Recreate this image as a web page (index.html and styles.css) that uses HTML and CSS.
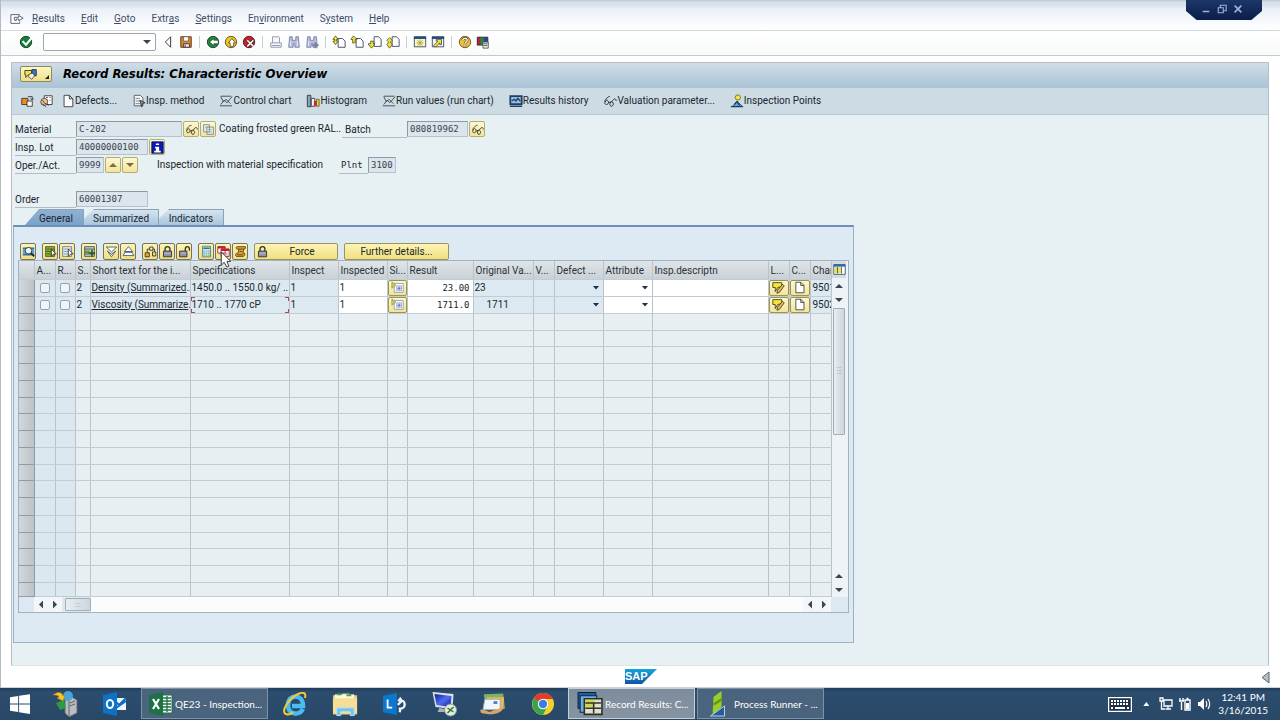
FILE: index.html
```html
<!DOCTYPE html>
<html lang="en">
<head>
<meta charset="utf-8">
<title>Record Results: Characteristic Overview</title>
<link rel="stylesheet" href="styles.css">
</head>
<body>
<svg class="defs" aria-hidden="true">
<defs>
<linearGradient id="gblue" x1="0" y1="0" x2="0" y2="1"><stop offset="0" stop-color="#14a5e0"/><stop offset="1" stop-color="#1453a5"/></linearGradient>
<linearGradient id="gscreen" x1="0" y1="0" x2="1" y2="1"><stop offset="0" stop-color="#0a1a9c"/><stop offset=".5" stop-color="#4f6cf0"/><stop offset="1" stop-color="#1020a0"/></linearGradient>
</defs>
<symbol id="menu" viewBox="0 0 16 16"><path d="M11 3H1v10h10v-2M5 9V6h5V4l5 3-5 3V8H7v2z" fill="#fff" stroke="#4a5568"/></symbol>
<symbol id="ok" viewBox="0 0 16 16"><circle cx="8" cy="8" r="6.5" fill="#14803a" stroke="#0b3b1a"/><path d="M4 7l4 4 6-7" fill="none" stroke="#fff" stroke-width="2.4"/></symbol>
<symbol id="tri" viewBox="0 0 16 16"><path d="M11 2v12L5 8z" fill="#fff" stroke="#222"/></symbol>
<symbol id="save" viewBox="0 0 16 16"><path d="M2 2h12v12H2z" fill="#d98a2b" stroke="#5b2d0a"/><path d="M5 2h6v5H5z" fill="#fff" stroke="#6e5a4a"/><path d="M5 10h7v4H5z" fill="#e9e2f2" stroke="#4a2c3c"/><path d="M7 11v3" stroke="#333"/></symbol>
<symbol id="back" viewBox="0 0 16 16"><circle cx="8" cy="8" r="6.5" fill="#1c8a3c" stroke="#10401d"/><path d="M4 8l5-4v2h5v4H9v2z" fill="#fff" stroke="#222" stroke-width=".7"/></symbol>
<symbol id="exit" viewBox="0 0 16 16"><circle cx="8" cy="8" r="6.5" fill="#f2c71c" stroke="#5b4a10"/><path d="M9 4l4 5h-2v4H7V9H5z" fill="#fff" stroke="#333" stroke-width=".8"/></symbol>
<symbol id="cancel" viewBox="0 0 16 16"><circle cx="8" cy="8" r="6.5" fill="#d01e28" stroke="#4c0c10"/><path d="M6 6l7 7M13 6l-7 7" stroke="#222" stroke-width="3"/><path d="M6 6l7 7M13 6l-7 7" stroke="#fff" stroke-width="1.8"/></symbol>
<symbol id="print" viewBox="0 0 16 16"><path d="M4 9V2h7l1 1v6M2 9h12v5H2zM3 12h10" fill="#f4f6fb" stroke="#8b93a8"/></symbol>
<symbol id="find" viewBox="0 0 16 16"><path d="M3 2h3v4h4V2h3l1 12H9v-4H7v4H2z" fill="#b9bedd" stroke="#777ea6"/><path d="M4 7v6M12 7v6" stroke="#eef"/></symbol>
<symbol id="findn" viewBox="0 0 16 16"><use href="#find"/><path d="M12 8v7M8.500 11.500h7" stroke="#777ea6" stroke-width="2"/></symbol>
<symbol id="pfirst" viewBox="0 0 16 16"><path d="M7 4h5l3 3v7H7z" fill="#fff" stroke="#37405a"/><path d="M4 1l3 4H5v2h2l-3 4-3-4h2V5H1z" fill="#f1e53c" stroke="#3b3a10" stroke-width=".8"/></symbol>
<symbol id="pup" viewBox="0 0 16 16"><path d="M7 4h5l3 3v7H7z" fill="#fff" stroke="#37405a"/><path d="M4 1l4 4H6v4H3V5H1z" fill="#f1e53c" stroke="#3b3a10" stroke-width=".8"/></symbol>
<symbol id="pdown" viewBox="0 0 16 16"><path d="M7 2h5l3 3v8H7z" fill="#fff" stroke="#37405a"/><path d="M3 7h3v3h2l-4 5-4-5h3z" fill="#f1e53c" stroke="#3b3a10" stroke-width=".8"/></symbol>
<symbol id="plast" viewBox="0 0 16 16"><path d="M7 2h5l3 3v8H7z" fill="#fff" stroke="#37405a"/><path d="M4 3l3 3-2 2 2 3-3 4-3-4 2-3-2-2z" fill="#f1e53c" stroke="#3b3a10" stroke-width=".8"/></symbol>
<symbol id="session" viewBox="0 0 16 16"><path d="M1.500 2.500h13v11h-13z" fill="#f8f6d0" stroke="#3a4350"/><path d="M1 3h14" stroke="#20497c" stroke-width="3"/><path d="M8 5v8M4 9h8M5 6l6 6M11 6l-6 6" stroke="#b2a21c"/></symbol>
<symbol id="shortcut" viewBox="0 0 16 16"><path d="M1.500 2.500h13v11h-13z" fill="#f6f8fa" stroke="#3a4350"/><path d="M1 3h14" stroke="#20497c" stroke-width="3"/><path d="M3 12l5-5H6V5h6v6h-2V9l-5 5z" fill="#f1e53c" stroke="#333" stroke-width=".8"/></symbol>
<symbol id="help" viewBox="0 0 16 16"><circle cx="8" cy="8" r="6.500" fill="#efc33a" stroke="#66500d"/><path d="M5.500 6c0-3 5-3 5 0 0 2-2.500 2-2.500 4M8 11v2" fill="none" stroke="#5a4610" stroke-width="3"/><path d="M5.500 6c0-3 5-3 5 0 0 2-2.500 2-2.500 4M8 11v2" fill="none" stroke="#fff" stroke-width="1.500"/></symbol>
<symbol id="local" viewBox="0 0 16 16"><path d="M1.500 2.500h12v9h-12z" fill="#b52437" stroke="#222"/><path d="M5 3h4v8H5z" fill="#218c3a"/><path d="M9 3h4v8H9z" fill="#2641b4"/><path d="M8 8h6v7H8zM9 10h4M9 12h4" fill="#eee" stroke="#555"/></symbol>
<symbol id="title" viewBox="0 0 16 16"><path d="M1 4h8v5H5l-3 3V9H1z" fill="#f1e53c" stroke="#333"/><path d="M9 3h5v7H9z" fill="#3c79c8" stroke="#1b2a4b"/><path d="M6 8l4-1 2 3-3 4-4-3z" fill="#f7f1de" stroke="#333" stroke-width=".8"/></symbol>
<symbol id="switch" viewBox="0 0 16 16"><path d="M2 5h7v7H2z" fill="#f08c1e" stroke="#333"/><path d="M8 8h6v6H8z" fill="#fff" stroke="#333"/><path d="M9 3h5v4M12 5l2 2 2-2" fill="none" stroke="#333"/></symbol>
<symbol id="valuate" viewBox="0 0 16 16"><path d="M6 2h9v10H6zM8 4h2M12 4h1M8 7h2M12 7h1" fill="#fff" stroke="#333"/><circle cx="6" cy="9" r="4" fill="#f0c49a" stroke="#543"/><path d="M4 7l2 3 5 3M4 11l4 4" fill="none" stroke="#333"/></symbol>
<symbol id="doc" viewBox="0 0 16 16"><path d="M3.500 1.500h6l4 4v9h-10zM9.500 1.500v4h4" fill="#fff" stroke="#30363f"/></symbol>
<symbol id="method" viewBox="0 0 16 16"><path d="M2.500 1.500h7l3 3v9h-10z" fill="#f7f9fa" stroke="#4b5561"/><path d="M4 5h5M4 8h5M4 11h5" stroke="#6e7882"/><path d="M9 7l6 3-3 1-1 4z" fill="#88939b" stroke="#333"/></symbol>
<symbol id="chart" viewBox="0 0 16 16"><path d="M2 2.500h12M1 13.500h14M2 12l4-5 3 3 6-7M2 3l3 6 3-3 5 5" fill="none" stroke="#39424c"/></symbol>
<symbol id="hist" viewBox="0 0 16 16"><path d="M1.500 1.500h4v13h-4z" fill="#7fa7c3" stroke="#333"/><path d="M6 5h4v9H6z" fill="#f6f6f6" stroke="#333"/><path d="M9 8h3v6H9z" fill="#c92934"/><path d="M12 6h3v8h-3z" fill="#e7d12d" stroke="#333" stroke-width=".7"/></symbol>
<symbol id="history" viewBox="0 0 16 16"><path d="M1.500 2.500h13v9h-13z" fill="#8cc0ea" stroke="#223d63" stroke-width="2"/><path d="M3 8l3-2 2 2 2-3 3 3M1 14h14" fill="none" stroke="#223d63" stroke-width="1.500"/></symbol>
<symbol id="glasses" viewBox="0 0 16 16"><path d="M2 9c0-3 5-7 6-6M4 7c-3 3-2 5 0 5 3 0 3-5 0-5M9 9c-2 3-1 5 1 5 3-1 2-6-1-5l-3 1M10 9c3-5 5-4 5-1" fill="none" stroke="#222"/></symbol>
<symbol id="points" viewBox="0 0 16 16"><path d="M3 14l5-6 6 6z" fill="#75afd4" stroke="#28577e"/><path d="M1 14.500h14M5 12l3-3 3 4" fill="none" stroke="#193f69" stroke-width="1.500"/><circle cx="9" cy="4" r="3" fill="#f4e448" stroke="#776b16"/></symbol>
<symbol id="copy" viewBox="0 0 16 16"><path d="M2 2h7v9H2zM6 5h8v9H6z" fill="#e5efef" stroke="#6f8480"/><path d="M4 5h4M8 8h4M8 11h4" stroke="#8aa39c"/></symbol>
<symbol id="info" viewBox="0 0 16 16"><path d="M1 1h14v14H1z" fill="#0a18b8" stroke="#050a50"/><path d="M6 3h4v2H6zM5 7h5v5h2v2H4v-2h2V9H5z" fill="#fff"/></symbol>
<symbol id="mag" viewBox="0 0 16 16"><path d="M1 3h14v10H1z" fill="#5ba0d6"/><path d="M1 4h14M1 12h14" stroke="#28577e"/><circle cx="8" cy="7" r="4" fill="#eef7fa" stroke="#222"/><path d="M11 10l4 4" stroke="#222" stroke-width="2"/></symbol>
<symbol id="selall" viewBox="0 0 16 16"><path d="M2 2h11v12H2z" fill="#8fb52b" stroke="#444"/><path d="M3 5h9M3 8h9M3 11h9" stroke="#34530e"/><path d="M9 5l6 6h-3l-3 3z" fill="#fff" stroke="#222"/></symbol>
<symbol id="desel" viewBox="0 0 16 16"><path d="M2 2h11v12H2z" fill="#e7eef3" stroke="#66727c"/><path d="M3 5h9M3 8h9M3 11h9" stroke="#72879b"/><path d="M9 5l6 6h-3l-3 3z" fill="#fff" stroke="#222"/></symbol>
<symbol id="insrow" viewBox="0 0 16 16"><path d="M2 2h12v12H2z" fill="#bfc9c2" stroke="#445"/><path d="M2 5h12M2 11h12" stroke="#445"/><path d="M2 7h6v3H2z" fill="#5b9a2d"/><path d="M11 6v8M7 10h8" stroke="#24601c" stroke-width="2"/></symbol>
<symbol id="expand" viewBox="0 0 16 16"><path d="M1.500 2.500h13l-6.500 6zM3 7.500l5 4 5-4-5 7z" fill="#fff" stroke="#334b79"/></symbol>
<symbol id="collapse" viewBox="0 0 16 16"><path d="M8 2l5 6H3zM3.500 9h9l2 4h-13z" fill="#fff" stroke="#334b79"/></symbol>
<symbol id="link" viewBox="0 0 16 16"><path d="M1.500 9.500h5v5h-5z" fill="#f5a72a" stroke="#222"/><path d="M10.500 8.500h4v5h-4z" fill="#f4e27a" stroke="#222"/><path d="M4 9V5h3M10 5h3v3" fill="none" stroke="#222"/><path d="M7 2.500h4v4H7z" fill="#eee" stroke="#222"/></symbol>
<symbol id="lock" viewBox="0 0 16 16"><path d="M5 8V5c0-4 6-4 6 0v3" fill="none" stroke="#333" stroke-width="1.600"/><path d="M3 7.500h10v7H3z" fill="#8e93aa" stroke="#222"/><path d="M4 10h8" stroke="#c7cad9"/></symbol>
<symbol id="unlock" viewBox="0 0 16 16"><path d="M9 8V5c0-4 5-4 5 0v2" fill="none" stroke="#333" stroke-width="1.600"/><path d="M2 7.500h9v7H2z" fill="#8e93aa" stroke="#222"/><path d="M3 10h7" stroke="#c7cad9"/></symbol>
<symbol id="calc" viewBox="0 0 16 16"><path d="M3 1.500h10v13H3z" fill="#d9ecea" stroke="#477"/><path d="M4 3h8v2H4z" fill="#297c87"/><path d="M4 7.500h8M4 10h8M4 12.500h8" stroke="#348790" stroke-dasharray="2 1"/></symbol>
<symbol id="copyred" viewBox="0 0 16 16"><path d="M1 2h9v8H1zM5 5h10v9H5z" fill="#fff" stroke="#8b1822"/><path d="M1 3h9M5 6h10" stroke="#bd202c" stroke-width="2.500"/><path d="M7 10h6M7 12h6" stroke="#c9666c"/></symbol>
<symbol id="scroll" viewBox="0 0 16 16"><path d="M4 2h10c1 3-1 3-2 3l-1 5h2c1 3-1 4-2 4H3c-2-1-1-4 1-4h1l1-5H4c-2 0-2-3 0-3z" fill="#d9a53c" stroke="#55380a"/><path d="M6 5h6M7 8h3M4 12h7" stroke="#55380a"/></symbol>
<symbol id="single" viewBox="0 0 16 16"><path d="M4 3h11v11H4z" fill="#fafcff" stroke="#9098a8"/><path d="M7 6h6v6H7z" fill="#dde6f7" stroke="#9aa8cc"/><path d="M10 7v4M8 9h4" stroke="#4763ad"/><path d="M1 1l5 4-5 4z" fill="#c9cc63" stroke="#7a7d3c" stroke-width=".7"/></symbol>
<symbol id="longtext" viewBox="0 0 16 16"><path d="M1 2h11v5l-5 1-3 5V8H1z" fill="#f5e72e" stroke="#333"/><path d="M13 4l2 2-6 8-3 1 1-4z" fill="#f2b84b" stroke="#333"/></symbol>
<symbol id="config" viewBox="0 0 16 16"><path d="M1 2h14v12H1z" fill="#fff" stroke="#234d84"/><path d="M1 3h14" stroke="#2c67b2" stroke-width="3"/><path d="M2 5h8v8H2z" fill="#f3e04c"/><path d="M5.500 5v8M10.500 5v8" stroke="#234d84"/></symbol>
<symbol id="win" viewBox="0 0 22 22"><path d="M0 3.500l9-1.300v8.300H0zM10 2l12-1.800v10.300H10zM0 11.500h9v8.300L0 18.500zM10 11.500h12V22l-12-1.800z" fill="#fff"/></symbol>
<symbol id="server" viewBox="0 0 26 26"><path d="M13 8l7-2 5 3v13l-8 4-4-4z" fill="#b9bdc0" stroke="#667"/><path d="M17 9v16M18 12l5-2M18 15l5-2" stroke="#5b646c"/><circle cx="16" cy="5" r="5" fill="#45a5dc"/><path d="M4 12l8-3 2 8-6 2z" fill="#2b9b46"/><path d="M1 4c5-4 9-3 10 1l2-1-2 6-6-3 2-1c-1-2-3-2-6-2z" fill="#f6c526" stroke="#b17b08" stroke-width=".6"/></symbol>
<symbol id="outlook" viewBox="0 0 24 24"><path d="M11 6h12v12H11z" fill="#eef6fd"/><path d="M11 8l5 5 7-7M13 16l10-7" stroke="#0f6cc0" stroke-width="2" fill="none"/><path d="M0 3l14-3v24L0 21z" fill="#0c72c6"/><ellipse cx="7" cy="12" rx="3.200" ry="4" fill="none" stroke="#fff" stroke-width="2"/></symbol>
<symbol id="excel" viewBox="0 0 24 24"><path d="M12 3h11v18H12z" fill="#fff" stroke="#1e7145"/><path d="M14 6h8M14 9h8M14 12h8M14 15h8M14 18h8M18 4v16" stroke="#1e7145" stroke-width="1.300"/><path d="M0 3l14-3v24L0 21z" fill="#1e7145"/><path d="M4 7l6 10M10 7L4 17" stroke="#fff" stroke-width="2.200"/></symbol>
<symbol id="ie" viewBox="0 0 24 24"><path d="M20 17c-4 7-15 6-15-4C5 2 20 1 20 14H9" fill="none" stroke="#49bdf0" stroke-width="4.500"/><path d="M3 22C-3 20 6 6 15 2c7-3 8 0 7 4M3 22c2 1 5 0 7-2" fill="none" stroke="#f5c932" stroke-width="2"/></symbol>
<symbol id="folder" viewBox="0 0 28 26"><path d="M1 4h8l2-2h7v2h8v20H1z" fill="#e8ca72"/><path d="M3 3h20v6H3z" fill="#fff5d8"/><path d="M5 3h5M15 4h5" stroke="#4a9d58" stroke-width="2"/><path d="M1 7h25v16H1z" fill="#f6df94"/><path d="M5 25v-8h18v8h-4v-4H9v4z" fill="#77c4ea" stroke="#b6e5f8"/></symbol>
<symbol id="lync" viewBox="0 0 26 24"><path d="M0 3l15-3v24L0 21z" fill="#0a78cf"/><path d="M5 7v9h5" fill="none" stroke="#fff" stroke-width="2"/><path d="M16 8h3c6 0 6 9 0 9h-2M16 13l4-4M19 17l-1 4M20 8l-2-3" fill="none" stroke="#e9f4fc" stroke-width="2.500"/></symbol>
<symbol id="rdp" viewBox="0 0 26 26"><path d="M1 1l21 2-1 15L4 16z" fill="#dce2e8"/><path d="M3 3l17 2-1 11L5 14z" fill="url(#gscreen)"/><path d="M8 17l5 1v3H6z" fill="#aab3ba"/><circle cx="19" cy="19" r="6" fill="#e4efe2" stroke="#8a9b88"/><path d="M16 17l3 2-3 3M22 16l-3 3 3 2" stroke="#2c7a35" fill="none" stroke-width="1.500"/></symbol>
<symbol id="mail" viewBox="0 0 28 24"><path d="M4 2l20-1 2 16H6z" fill="#7db35c"/><path d="M7 5h18l-1 12H5z" fill="#f4b652"/><path d="M5 7h16v11H3z" fill="#f2f6fa" stroke="#91a9bd"/><path d="M14 9h4v3h-4z" fill="#4d88c6"/><path d="M0 18c8-1 8 4 13 1l12-4c-3 8-14 9-24 6z" fill="#d9a663"/></symbol>
<symbol id="chrome" viewBox="0 0 24 24"><circle cx="12" cy="12" r="11" fill="#f7cf2c"/><path d="M12 12L2.500 6.500C6-1 18-1 22 7H12z" fill="#df3c30"/><path d="M12 12L2.500 6.500C-1 14 4 23 12 23l4-8z" fill="#36a350"/><circle cx="12" cy="12" r="5.200" fill="#fff"/><circle cx="12" cy="12" r="4.200" fill="#3e7de0"/></symbol>
<symbol id="sapgui" viewBox="0 0 26 24"><path d="M2 1h17v15H2z" fill="#1f5da6" stroke="#0e1f38"/><path d="M4 4h16v16H4z" fill="#6db0e0" stroke="#10233c"/><path d="M8 7h17v15H8z" fill="#dfe0d2" stroke="#2d3020" stroke-width="1.500"/><path d="M9 8h9v7H9z" fill="#cfd848"/><path d="M9 11h15M9 16h15M17 11v10" stroke="#30342a" stroke-width="1.500"/></symbol>
<symbol id="runner" viewBox="0 0 20 26"><path d="M5 6l8-6v16L4 24z" fill="#9bcf28"/><path d="M5 12l8-5v3l-8 5z" fill="#5f9b19"/><path d="M2 25l14-10v10z" fill="#255d98" stroke="#b4d2ec"/></symbol>
<symbol id="kbd" viewBox="0 0 24 15"><path d="M.5.500h23v14H.5z" fill="#1d3148" stroke="#fff" stroke-width="1.500"/><path d="M3 4h18M3 7h18" stroke="#fff" stroke-width="2" stroke-dasharray="2 1"/><path d="M3 11h2M7 11h10M19 11h2" stroke="#fff" stroke-width="2"/></symbol>
<symbol id="net" viewBox="0 0 14 14"><path d="M5 3h8v6H5zM7 12h5M9 9v3M1 1h3v3H1zM2.500 4v8h4" fill="none" stroke="#fff" stroke-width="1.300"/></symbol>
<symbol id="bat" viewBox="0 0 14 14"><path d="M7 3h5v10H7zM8.500 1.500h2" fill="none" stroke="#fff" stroke-width="1.400"/><path d="M8 6h3v6H8z" fill="#fff"/><path d="M1 4h5M2 1v3M5 1v3M3.500 5v8" stroke="#fff" stroke-width="1.400"/></symbol>
<symbol id="vol" viewBox="0 0 14 14"><path d="M1 5h2l4-4v12L3 9H1z" fill="#fff"/><path d="M9 4c1 2 1 4 0 6M11 2c2 3 2 7 0 10" fill="none" stroke="#fff" stroke-width="1.200"/></symbol>
</svg>

<div class="session">
  <header class="edge">
    <div class="winctl">
      <button aria-label="Minimize"><svg viewBox="0 0 12 12"><path d="M2 9h8" stroke="#9db4dc" stroke-width="2"/></svg></button>
      <button aria-label="Restore"><svg viewBox="0 0 12 12"><path d="M4 4V1.500h7V8H8M1.500 4.500h6v6h-6z" fill="none" stroke="#9db4dc" stroke-width="1.300"/></svg></button>
      <button aria-label="Close"><svg viewBox="0 0 12 12"><path d="M2 2l8 8M10 2l-8 8" stroke="#9db4dc" stroke-width="2"/></svg></button>
    </div>
  </header>
  <nav class="menubar">
    <button aria-label="System menu"><svg class="ic"><use href="#menu"/></svg></button>
    <button><u>R</u>esults</button><button><u>E</u>dit</button><button><u>G</u>oto</button><button>Extr<u>a</u>s</button><button><u>S</u>ettings</button><button>En<u>v</u>ironment</button><button>S<u>y</u>stem</button><button><u>H</u>elp</button>
  </nav>
  <div class="stdbar">
    <button aria-label="Enter"><svg class="ic"><use href="#ok"/></svg></button>
    <div class="command"><input type="text" aria-label="Command field"><button aria-label="Command history"><i class="down"></i></button></div>
    <button aria-label="Hide command field"><svg class="ic"><use href="#tri"/></svg></button>
    <button aria-label="Save"><svg class="ic"><use href="#save"/></svg></button><i class="sep"></i>
    <button aria-label="Back"><svg class="ic"><use href="#back"/></svg></button>
    <button aria-label="Exit"><svg class="ic"><use href="#exit"/></svg></button>
    <button aria-label="Cancel"><svg class="ic"><use href="#cancel"/></svg></button><i class="sep"></i>
    <button aria-label="Print"><svg class="ic"><use href="#print"/></svg></button>
    <button aria-label="Find"><svg class="ic"><use href="#find"/></svg></button>
    <button aria-label="Find next"><svg class="ic"><use href="#findn"/></svg></button><i class="sep"></i>
    <button aria-label="First page"><svg class="ic"><use href="#pfirst"/></svg></button>
    <button aria-label="Previous page"><svg class="ic"><use href="#pup"/></svg></button>
    <button aria-label="Next page"><svg class="ic"><use href="#pdown"/></svg></button>
    <button aria-label="Last page"><svg class="ic"><use href="#plast"/></svg></button><i class="sep"></i>
    <button aria-label="New session"><svg class="ic"><use href="#session"/></svg></button>
    <button aria-label="Create shortcut"><svg class="ic"><use href="#shortcut"/></svg></button><i class="sep"></i>
    <button aria-label="Help"><svg class="ic"><use href="#help"/></svg></button>
    <button aria-label="Customize layout"><svg class="ic"><use href="#local"/></svg></button>
  </div>

  <main class="screen">
    <div class="titlebar">
      <button class="objbtn" aria-label="Services"><svg class="ic"><use href="#title"/></svg><span></span></button>
      <h1>Record Results: Characteristic Overview</h1>
    </div>
    <div class="appbar">
      <button aria-label="Switch view"><svg class="ic"><use href="#switch"/></svg></button>
      <button aria-label="Valuate"><svg class="ic"><use href="#valuate"/></svg></button>
      <button><svg class="ic"><use href="#doc"/></svg>Defects...</button>
      <button><svg class="ic"><use href="#method"/></svg>Insp. method</button>
      <button><svg class="ic"><use href="#chart"/></svg>Control chart</button>
      <button><svg class="ic"><use href="#hist"/></svg>Histogram</button>
      <button><svg class="ic"><use href="#chart"/></svg>Run values (run chart)</button>
      <button><svg class="ic"><use href="#history"/></svg>Results history</button>
      <button><svg class="ic"><use href="#glasses"/></svg>Valuation parameter...</button>
      <button><svg class="ic"><use href="#points"/></svg>Inspection Points</button>
    </div>
    <div class="content">
      <form class="head">
        <div class="row">
          <label class="lab" for="mat">Material</label><input id="mat" class="f-mat" value="C-202" readonly>
          <button type="button" class="yb" aria-label="Display material"><svg class="ic"><use href="#glasses"/></svg></button>
          <button type="button" class="yb" aria-label="Copy"><svg class="ic"><use href="#copy"/></svg></button>
          <span class="desc">Coating frosted green RAL..</span>
          <label class="lab batch" for="batch">Batch</label><input id="batch" class="f-batch" value="080819962" readonly>
          <button type="button" class="yb" aria-label="Display batch"><svg class="ic"><use href="#glasses"/></svg></button>
        </div>
        <div class="row">
          <label class="lab" for="lot">Insp. Lot</label><input id="lot" class="f-lot" value="40000000100" readonly>
          <button type="button" class="yb" aria-label="Lot information"><svg class="ic"><use href="#info"/></svg></button>
        </div>
        <div class="row">
          <label class="lab" for="op">Oper./Act.</label><input id="op" class="f-op" value="9999" readonly>
          <button type="button" class="yb" aria-label="Previous operation"><i class="up olive"></i></button>
          <button type="button" class="yb" aria-label="Next operation"><i class="down olive"></i></button>
          <span class="opdesc">Inspection with material specification</span>
          <label class="lab plnt" for="pl">Plnt</label><input id="pl" class="f-op" value="3100" readonly>
        </div>
        <div class="row order">
          <label class="lab" for="ord">Order</label><input id="ord" class="f-ord" value="60001307" readonly>
        </div>
      </form>

      <section class="tabstrip">
        <div class="tabs" role="tablist">
          <button role="tab" aria-selected="true">General</button><button role="tab">Summarized</button><button role="tab">Indicators</button>
        </div>
        <div class="panel">
          <div class="tools">
            <div><button class="yb" aria-label="Details"><svg class="ic"><use href="#mag"/></svg></button></div>
            <div><button class="yb" aria-label="Select all"><svg class="ic"><use href="#selall"/></svg></button><button class="yb" aria-label="Deselect all"><svg class="ic"><use href="#desel"/></svg></button></div>
            <div><button class="yb" aria-label="Insert row"><svg class="ic"><use href="#insrow"/></svg></button></div>
            <div><button class="yb" aria-label="Expand"><svg class="ic"><use href="#expand"/></svg></button><button class="yb" aria-label="Collapse"><svg class="ic"><use href="#collapse"/></svg></button></div>
            <div><button class="yb" aria-label="Valuate characteristic"><svg class="ic"><use href="#link"/></svg></button><button class="yb" aria-label="Close characteristic"><svg class="ic"><use href="#lock"/></svg></button><button class="yb" aria-label="Open characteristic"><svg class="ic"><use href="#unlock"/></svg></button></div>
            <div class="pointed"><button class="yb" aria-label="Calculate"><svg class="ic"><use href="#calc"/></svg></button><button class="yb" aria-label="Copy results"><svg class="ic"><use href="#copyred"/></svg></button><button class="yb" aria-label="Log"><svg class="ic"><use href="#scroll"/></svg></button>
              <svg class="cursor" viewBox="0 0 12 18"><path d="M1 1v14l3-3 3 5 2-1-2-5h4z" fill="#fff" stroke="#333"/></svg></div>
            <button class="yb wide force"><svg class="ic"><use href="#lock"/></svg><span>Force</span></button>
            <button class="yb wide more">Further details...</button>
          </div>
          <div class="gridbox">
            <table>
              <colgroup><col class="w15"><col class="w21"><col class="w20"><col class="w15"><col class="w100"><col class="w99"><col class="w49"><col class="w49"><col class="w20"><col class="w66"><col class="w60"><col class="w21"><col class="w49"><col class="w49"><col class="w116"><col class="w21"><col class="w21"><col></colgroup>
              <thead><tr><th></th><th>A...</th><th>R...</th><th>S..</th><th>Short text for the i...</th><th>Specifications</th><th>Inspect</th><th>Inspected</th><th>Si...</th><th>Result</th><th>Original Va...</th><th>V...</th><th>Defect ...</th><th>Attribute</th><th>Insp.descriptn</th><th>L...</th><th>C...</th><th>Char.</th></tr></thead>
              <tbody id="rows">
                <tr class="data"><td></td><td><input type="checkbox" aria-label="Row 1 A"></td><td><input type="checkbox" aria-label="Row 1 R"></td><td>2</td><td><a href="#">Density (Summarized</a>..</td><td>1450.0 .. 1550.0 kg/ ..</td><td>1</td><td class="in">1</td><td class="b"><button class="yb" aria-label="Single results"><svg class="ic"><use href="#single"/></svg></button></td><td class="in num">23.00</td><td>23</td><td></td><td class="b"><span class="pick"><select aria-label="Defect class 1"></select></span></td><td class="in b"><span class="pick"><select aria-label="Attribute 1"></select></span></td><td class="in"></td><td class="b"><button class="yb" aria-label="Long text"><svg class="ic"><use href="#longtext"/></svg></button></td><td class="b"><button class="yb" aria-label="Create"><svg class="ic"><use href="#doc"/></svg></button></td><td>9501</td></tr>
                <tr class="data"><td></td><td><input type="checkbox" aria-label="Row 2 A"></td><td><input type="checkbox" aria-label="Row 2 R"></td><td>2</td><td><a href="#">Viscosity (Summarize</a>..</td><td class="focus">1710 .. 1770 cP</td><td>1</td><td class="in">1</td><td class="b"><button class="yb" aria-label="Single results"><svg class="ic"><use href="#single"/></svg></button></td><td class="in num">1711.0</td><td class="indent">1711</td><td></td><td class="b"><span class="pick"><select aria-label="Defect class 2"></select></span></td><td class="in b"><span class="pick"><select aria-label="Attribute 2"></select></span></td><td class="in"></td><td class="b"><button class="yb" aria-label="Long text"><svg class="ic"><use href="#longtext"/></svg></button></td><td class="b"><button class="yb" aria-label="Create"><svg class="ic"><use href="#doc"/></svg></button></td><td>9502</td></tr>
              </tbody>
            </table>
            <div class="vscroll">
              <button aria-label="Table settings"><svg class="ic"><use href="#config"/></svg></button>
              <button aria-label="Scroll up"><i class="up"></i></button><button aria-label="Scroll down"><i class="down"></i></button>
              <div class="thumb">⁝⁝</div><div class="fill"></div>
              <button aria-label="Page up"><i class="up"></i></button><button aria-label="Page down"><i class="down"></i></button>
            </div>
            <div class="hscroll">
              <button aria-label="Scroll left"><i class="left"></i></button><button aria-label="Scroll right"><i class="right"></i></button>
              <div class="hthumb">:::</div><div class="fill"></div>
              <button aria-label="Page left"><i class="left"></i></button><button aria-label="Page right"><i class="right"></i></button>
            </div>
          </div>
        </div>
      </section>
    </div>
  </main>
  <footer class="status">
    <svg class="sap" viewBox="0 0 32 15" role="img" aria-label="SAP"><path d="M0 0h32L17 15H0z" fill="url(#gblue)"/><text x="0" y="11">SAP</text></svg>
    <button aria-label="Show status"><svg class="ic"><path d="M11 2v11L4 7.500z" fill="#b5bdc4" stroke="#5b6670"/></svg></button>
  </footer>
</div>
<footer class="taskbar">
  <button class="pin" aria-label="Start"><svg class="s22"><use href="#win"/></svg></button>
  <button class="pin" aria-label="Server manager"><svg class="s26"><use href="#server"/></svg></button>
  <button class="pin" aria-label="Outlook"><svg class="s24"><use href="#outlook"/></svg></button>
  <button class="task"><svg class="s24"><use href="#excel"/></svg>QE23 - Inspection...</button>
  <button class="pin" aria-label="Internet Explorer"><svg class="s24"><use href="#ie"/></svg></button>
  <button class="pin" aria-label="File Explorer"><svg class="s26"><use href="#folder"/></svg></button>
  <button class="pin" aria-label="Lync"><svg class="s24"><use href="#lync"/></svg></button>
  <button class="pin narrow" aria-label="Remote Desktop"><svg class="s26"><use href="#rdp"/></svg></button>
  <button class="pin narrow" aria-label="Mail"><svg class="s26"><use href="#mail"/></svg></button>
  <button class="pin" aria-label="Chrome"><svg class="s24"><use href="#chrome"/></svg></button>
  <button class="task active"><svg class="s26"><use href="#sapgui"/></svg>Record Results: C...</button>
  <button class="task"><svg class="s26"><use href="#runner"/></svg>Process Runner - ...</button>
  <div class="tray">
    <svg class="kb"><use href="#kbd"/></svg><i class="up"></i><svg class="ti"><use href="#net"/></svg><svg class="ti"><use href="#bat"/></svg><svg class="ti"><use href="#vol"/></svg>
    <div class="clock"><span>12:41 PM</span><span>3/16/2015</span></div>
  </div>
</footer>
<script src="rows.js"></script>
</body>
</html>
```
FILE: styles.css
```css
* { box-sizing: border-box; }
body { margin: 0; min-height: 100vh; display: flex; flex-direction: column; background: #fff; color: #20262c; font: 10px/14px Roboto, "Noto Sans", sans-serif; }
button, input, select { font: inherit; color: inherit; margin: 0; border-radius: 0; }
button { padding: 0; border: 0; background: none; display: inline-flex; align-items: center; justify-content: center; white-space: nowrap; }
.defs { position: absolute; width: 0; height: 0; }
.ic { width: 14px; height: 14px; flex: none; }
.up, .down, .left, .right { display: inline-block; width: 8px; height: 4px; background: #3c4450; flex: none; }
.up { clip-path: polygon(50% 0, 100% 100%, 0 100%); }
.down { clip-path: polygon(0 0, 100% 0, 50% 100%); }
.left, .right { width: 4px; height: 8px; }
.left { clip-path: polygon(100% 0, 100% 100%, 0 50%); }
.right { clip-path: polygon(0 0, 100% 50%, 0 100%); }

.session { flex: 1; display: flex; flex-direction: column; border-left: 1px solid #b4bac0; }
.edge { height: 9px; background: linear-gradient(#bcc9d8 0, #dfe6ee 3px, #d3dfe9 4px, #eaf0f7); position: relative; }
.winctl { position: absolute; right: 18px; top: 0; width: 76px; height: 20px; display: flex; justify-content: center; gap: 4px; padding-right: 4px; background: linear-gradient(#1c3768, #0b1d48); clip-path: polygon(0 0, 100% 0, 100% 55%, 86% 100%, 14% 100%, 0 55%); z-index: 2; }
.winctl button { width: 12px; height: 18px; }
.winctl svg { width: 10px; height: 10px; }
.menubar { height: 22px; display: flex; align-items: center; gap: 16px; padding: 0 10px 2px 9px; background: linear-gradient(#eaf1f9, #fff); border-bottom: 1px solid #d3d9de; color: #414c66; }
.menubar button:first-child { margin-right: -8px; }
.stdbar { height: 25px; display: flex; align-items: center; padding: 0 16px 2px; background: linear-gradient(#fff, #f8fafa); border-bottom: 1px solid #c3c9cf; }
.stdbar > button { width: 18px; height: 18px; }
.sep { width: 1px; height: 12px; margin: 0 4px; background: #c8ced4; }
.command { display: flex; width: 113px; height: 18px; margin: 0 3px 0 8px; border: 1px solid #9ca4ac; border-radius: 2px; background: #fff; }
.command input { flex: 1; min-width: 0; border: 0; background: none; padding: 0 3px; }
.command button { width: 16px; }

.screen { flex: 1; margin: 6px 11px 0 10px; border: 1px solid #b5bec8; border-bottom-color: #dde5e8; background: #e7f0f3; }
.titlebar { height: 25px; display: flex; align-items: center; padding: 0 8px 3px; gap: 11px; background: linear-gradient(#d0dde5, #a9c3d7); }
.titlebar h1 { margin: 0; font: italic bold 13px/18px "DejaVu Sans Condensed", sans-serif; color: #000; }
.objbtn { width: 32px; height: 16px; border: 1px solid #8d8a5c; border-radius: 2px; background: linear-gradient(#fdf6c8, #efdf8a); justify-content: space-between; padding: 0 2px 0 3px; }
.objbtn span { width: 4px; height: 4px; margin-top: 6px; background: #222; clip-path: polygon(100% 0, 100% 100%, 0 100%); }
.appbar { height: 27px; display: flex; align-items: center; gap: 15px; padding-left: 8px; background: #cddce4; border-bottom: 1px solid #b9c7cf; }
.appbar button:first-child { margin-right: -10px; }
.appbar button:nth-child(2) { margin-right: -7px; }

.content { padding: 5px 0 22px 1px; }
.row { display: flex; align-items: center; height: 18px; padding-left: 2px; }
.order { margin-top: 16px; }
.lab { width: 61px; height: 17px; line-height: 17px; border-bottom: 1px solid #b3bcc2; white-space: nowrap; }
.head input { height: 16px; padding: 0 2px; border: 1px solid #8e99a5; border-right-color: #b7c1c9; border-bottom-color: #b7c1c9; background: #dbe5ec; color: #39424c; font: 9px/12px "DejaVu Sans Mono", monospace; outline: 0; }
.f-mat { width: 106px; }
.f-lot, .f-ord { width: 72px; }
.f-op { width: 28px; }
.f-batch { width: 61px; }
.yb { width: 16px; height: 16px; border: 1px solid #8f8a63; border-radius: 2px; background: linear-gradient(#fdf8d2, #f2e598); }
.yb .ic { width: 13px; height: 13px; }
.row .yb { margin-left: 1px; border-color: #b3ab78; }
.olive { background: #77713f; }
.desc { width: 123px; margin-left: 3px; white-space: nowrap; }
.batch { width: 65px; padding-left: 3px; }
.opdesc { width: 182px; margin-left: 19px; white-space: nowrap; }
.plnt { width: 29px; padding-left: 2px; font: 9px/16px "DejaVu Sans Mono", monospace; }

.tabstrip { max-width: 841px; }
.tabs { display: flex; padding-left: 12px; height: 17px; align-items: flex-end; }
.tabs button { height: 16px; padding: 3px 0 0; background: linear-gradient(#d5e3ee, #a9c6de); clip-path: polygon(10px 0, 100% 0, 100% 100%, 0 100%, 0 60%); border-top: 1px solid #8aa2b8; border-right: 1px solid #8aa2b8; }
.tabs button:nth-child(1) { width: 59px; padding-left: 4px; background: linear-gradient(#8fb1d2, #7aa3c9); clip-path: polygon(14px 0, 100% 0, 100% 100%, 0 100%); }
.tabs button:nth-child(2) { width: 75px; }
.tabs button:nth-child(3) { width: 65px; }
.panel { border: 1px solid #9bb2c6; border-top: 2px solid #6f90b6; background: #ddeaf3; padding: 15px 4px 29px; }
.tools { display: flex; gap: 6px; height: 18px; padding: 1px 0 0 2px; }
.tools > div { display: flex; gap: 1px; }
.tools .yb { height: 17px; border-color: #77745a; background: linear-gradient(#fdf4b4, #f0df80); }
.tools .wide { border-color: #9a9464; }
.tools .force { width: 84px; padding: 0 2px 0 1px; justify-content: flex-start; }
.force span { flex: 1; }
.tools .more { width: 105px; }
.pointed { position: relative; }
.cursor { position: absolute; left: 22px; top: 8px; width: 12px; height: 17px; }

.gridbox { display: grid; grid-template-columns: minmax(0, 1fr) 16px; border: 1px solid #a3b1bd; background: #dde9f2; }
table { width: 100%; table-layout: fixed; border-collapse: collapse; height: 336px; }
.w15 { width: 15px; } .w20 { width: 20px; } .w21 { width: 21px; } .w49 { width: 49px; } .w60 { width: 60px; } .w66 { width: 66px; } .w99 { width: 99px; } .w100 { width: 100px; } .w116 { width: 116px; }
th, td { height: 17px; padding: 0 1px; border-right: 1px solid #b9c3cb; border-bottom: 1px solid #c3ccd3; overflow: hidden; white-space: nowrap; text-align: left; line-height: 14px; background: #e7eff3; }
th { height: 18px; padding: 2px 0 0 2px; font-weight: normal; background: linear-gradient(#dfe5e9, #c9d1d6); color: #2b3238; }
tbody tr:nth-child(4n) td { height: 16px; }
tbody tr:last-child td { height: 14px; }
tbody td:first-child { background: linear-gradient(90deg, #d2d7db, #bcc3c8); border-bottom-color: #929ba3; border-right-color: #929ba3; }
td:nth-child(2), td:nth-child(3) { background: #dce8f0; text-align: center; }
.data td:nth-child(n+4) { background: #dde9f1; }
.data td.in { background: #fff; }
.data td:nth-child(18) { padding-left: 2px; }
.data .num { font: 9px/14px "DejaVu Sans Mono", monospace; text-align: right; padding-right: 3px; }
.data .indent { padding-left: 13px; }
td.b { padding: 0; }
td .yb { display: flex; width: 100%; height: 16px; border-color: #9c9352; }
td input { appearance: none; display: block; width: 10px; height: 10px; margin: 0 auto; border: 1px solid #98a2aa; border-radius: 2px; background: #eef4f7; }
td a { color: inherit; }
.pick { display: block; position: relative; height: 16px; }
.pick select { appearance: none; width: 100%; height: 16px; border: 0; background: none; display: block; }
.pick::after { content: ""; position: absolute; right: 3px; top: 6px; width: 7px; height: 4px; background: #22304c; clip-path: polygon(0 0, 100% 0, 50% 100%); pointer-events: none; }
td.focus { background-image: linear-gradient(#b8455a, #b8455a), linear-gradient(#b8455a, #b8455a), linear-gradient(#b8455a, #b8455a), linear-gradient(#b8455a, #b8455a), linear-gradient(#b8455a, #b8455a), linear-gradient(#b8455a, #b8455a), linear-gradient(#b8455a, #b8455a), linear-gradient(#b8455a, #b8455a) !important; background-repeat: no-repeat !important; background-size: 4px 1px, 1px 4px, 4px 1px, 1px 4px, 4px 1px, 1px 4px, 4px 1px, 1px 4px !important; background-position: left top, left top, right top, right top, left bottom, left bottom, right bottom, right bottom !important; }
.vscroll { display: flex; flex-direction: column; background: #eef3f7; padding-right: 2px; }
.vscroll button { height: 14px; }
.vscroll button:first-child { height: 17px; margin-bottom: 1px; background: #d5dce0; }
.vscroll .ic { width: 13px; height: 13px; }
.thumb, .hthumb { border: 1px solid #a1adb7; border-radius: 1px; background: linear-gradient(90deg, #e8eef2, #ccd6dd); display: flex; align-items: center; justify-content: center; color: #8c98a3; font-size: 8px; line-height: 8px; }
.thumb { height: 127px; margin: 1px; }
.fill { flex: 1; }
.hscroll { grid-column: 1 / -1; display: flex; height: 15px; padding: 0 17px 0 15px; }
.hscroll button { width: 14px; background: #f3f7f9; }
.hthumb { width: 26px; height: 13px; margin: 1px 0 0 3px; }
.hscroll .fill { background: #fbfdfd; }

.status { height: 22px; display: flex; align-items: center; justify-content: center; position: relative; border-bottom: 1px solid #c9d3da; }
.sap { width: 32px; height: 15px; }
.sap text { fill: #fff; font: bold 11px "Liberation Sans", sans-serif; }
.status button { position: absolute; right: 8px; top: 4px; }

.taskbar { display: flex; height: 32px; align-items: stretch; padding-left: 8px; background: linear-gradient(#1f3c5a, #2c4d6e 4px, #294868); color: #fff; font: 10px/14px Lato, "Noto Sans", sans-serif; }
.pin { width: 50px; }
.pin:nth-child(1) { width: 24px; margin-right: 20px; }
.pin:nth-child(2) { width: 26px; margin-right: 10px; }
.pin:nth-child(3) { width: 53px; }
.pin.narrow { width: 49px; }
.s22 { width: 22px; height: 20px; } .s24 { width: 24px; height: 24px; } .s26 { width: 27px; height: 26px; }
.task { width: 127px; margin: 0 2px 1px 0; justify-content: flex-start; gap: 2px; padding-left: 7px; background: #4b647d; border: 1px solid #7f92a5; }
.task.active { background: linear-gradient(#7d8d9d, #8793a0); border-color: #c6ced6; }
.tray { margin-left: auto; display: flex; align-items: center; gap: 5px; padding-right: 12px; }
.tray .up { background: #fff; width: 6px; height: 4px; margin: 0 5px 0 6px; }
.kb { width: 24px; height: 15px; }
.ti { width: 14px; height: 14px; }
.clock { display: flex; flex-direction: column; align-items: center; margin-left: 2px; line-height: 13px; }
```
FILE: rows.js
```js
const body = document.getElementById("rows");
for (let i = 0; i < 17; i++) {
  const row = body.insertRow();
  for (let c = 0; c < 18; c++) row.insertCell();
}
```
